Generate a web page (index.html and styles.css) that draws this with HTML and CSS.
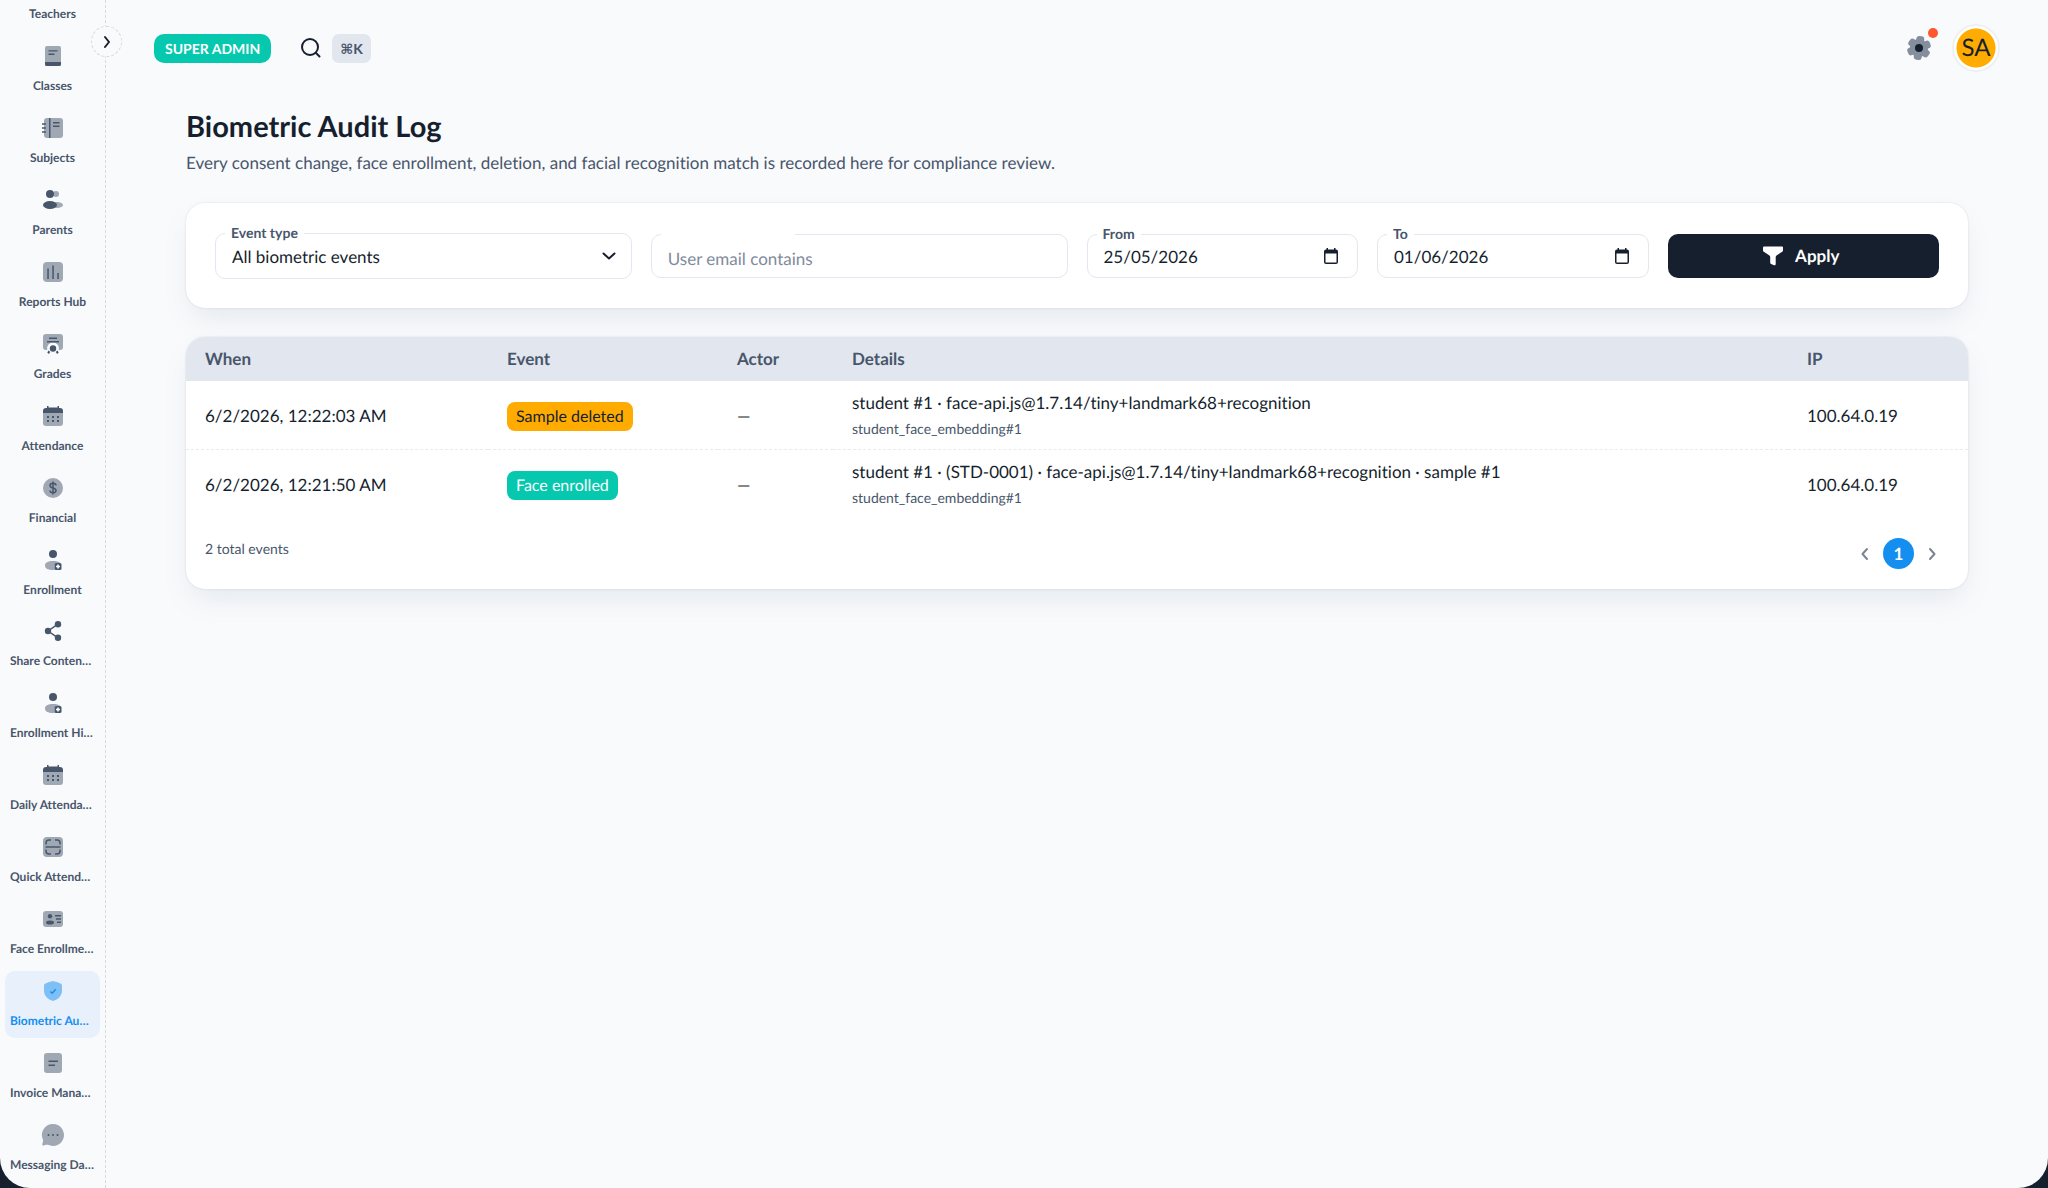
FILE: index.html
```html
<!DOCTYPE html>
<html lang="en">
<head>
<meta charset="utf-8">
<title>Biometric Audit Log</title>
<link rel="stylesheet" href="styles.css">
</head>
<body>
<svg width="0" height="0" class="sprite" aria-hidden="true">
  <symbol id="i-classes" viewBox="0 0 24 24"><path class="soft" d="M6 2h12a2 2 0 0 1 2 2v18H4V4a2 2 0 0 1 2-2z"/><path d="M4 18h16v2a2 2 0 0 1-2 2H6a2 2 0 0 1-2-2z"/><path d="M7.500 6.200h9v1.400h-9zM7.500 9.600h6v1.400h-6z"/></symbol>
  <symbol id="i-subjects" viewBox="0 0 24 24"><path class="soft" d="M6 2h13a3 3 0 0 1 3 3v14a3 3 0 0 1-3 3H6a3 3 0 0 1-3-3V5a3 3 0 0 1 3-3z"/><path d="M8 2h1.500v20H8zM1 7.200h4v1.500H1zM1 11.200h4v1.500H1zM1 15.200h4v1.500H1zM12 6h6.500v1.500H12zM12 9.500h6.500V11H12z"/></symbol>
  <symbol id="i-parents" viewBox="0 0 24 24"><circle class="soft" cx="15" cy="6" r="3"/><ellipse class="soft" cx="16" cy="17" rx="6" ry="3"/><circle cx="9" cy="6" r="4"/><ellipse cx="9" cy="17" rx="7" ry="4"/></symbol>
  <symbol id="i-reports" viewBox="0 0 24 24"><rect class="soft" x="2" y="2" width="20" height="20" rx="4"/><path d="M6.300 8.500h1.500V19H6.300zM11.300 5.500h1.500V19h-1.500zM16.300 13h1.500v6h-1.500z"/></symbol>
  <symbol id="i-grades" viewBox="0 0 24 24"><path class="soft" d="M5 2h14a3 3 0 0 1 3 3v10a3 3 0 0 1-3 3h-1.200a6 6 0 1 0-11.600 0H5a3 3 0 0 1-3-3V5a3 3 0 0 1 3-3z"/><path d="M8 5.500h8V7H8zM6 9h12v1.500H6z"/><circle cx="12" cy="16.500" r="3.200"/><path d="M7.500 18.500l1.800 1.600-1.500 2-1.500-1.500zM16.500 18.500l-1.800 1.600 1.500 2 1.500-1.500z"/></symbol>
  <symbol id="i-calendar" viewBox="0 0 24 24"><path class="soft" d="M2 9h20v10a3 3 0 0 1-3 3H5a3 3 0 0 1-3-3z"/><path d="M2 9V7a3 3 0 0 1 3-3h1V2h1.500v1.500h9V2H18v2h1a3 3 0 0 1 3 3v2z"/><path d="M6 12h2v2H6zM11 12h2v2h-2zM16 12h2v2h-2zM6 16h2v2H6zM11 16h2v2h-2zM16 16h2v2h-2z"/></symbol>
  <symbol id="i-financial" viewBox="0 0 24 24"><circle class="soft" cx="12" cy="12" r="10"/><path class="line" d="M15 9.500c0-1.500-1.300-2.300-3-2.300s-3 .8-3 2.300 1.300 2.200 3 2.500 3 1 3 2.500-1.300 2.300-3 2.300-3-.8-3-2.300M12 5.500v13"/></symbol>
  <symbol id="i-enroll" viewBox="0 0 24 24"><circle cx="12" cy="6" r="4"/><path class="soft" d="M14 22h-2c-5 0-8-1.500-8-4.500S7 13 12 13c3 0 6 .6 7.200 2H15.500a2 2 0 0 0-2 2v4a2 2 0 0 0 .5 1z"/><rect x="13.500" y="15" width="7" height="7" rx="1.500"/><path class="cut" d="M17 16.500v4M15 18.500h4"/></symbol>
  <symbol id="i-share" viewBox="0 0 24 24"><circle cx="7" cy="12" r="3.200"/><circle cx="17" cy="5.200" r="3.200"/><circle cx="17" cy="18.800" r="3.200"/><path class="line" d="M17 5.200L7 12l10 6.800"/></symbol>
  <symbol id="i-scan" viewBox="0 0 24 24"><rect class="soft" x="2" y="2" width="20" height="20" rx="4"/><path class="line" d="M4.500 12h15M5 9.500V8a3 3 0 0 1 3-3h2M14 5h2a3 3 0 0 1 3 3v1.500M5 14.500V16a3 3 0 0 0 3 3h2M14 19h2a3 3 0 0 0 3-3v-1.500"/></symbol>
  <symbol id="i-face" viewBox="0 0 24 24"><rect class="soft" x="2" y="4" width="20" height="16" rx="3"/><circle cx="9" cy="9.200" r="2.200"/><ellipse cx="9" cy="15.500" rx="4" ry="2"/><path d="M14 8h6v1.500h-6zM15 11.300h5v1.500h-5zM16 14.500h4V16h-4z"/></symbol>
  <symbol id="i-shield" viewBox="0 0 24 24"><path class="soft" d="M12 2c2 .3 6 1.700 8 2.800.7.400 1 .9 1 1.700v5c0 5.500-4 9-9 10.500C7 20.500 3 17 3 11.500v-5c0-.8.300-1.300 1-1.700C6 3.700 10 2.300 12 2z"/><path class="line" d="M9.300 12.500l1.900 1.700 3.500-4"/></symbol>
  <symbol id="i-invoice" viewBox="0 0 24 24"><rect class="soft" x="3" y="2" width="18" height="20" rx="3"/><path d="M7.500 9.500h9.500V11H7.500zM7.500 13.500H14V15H7.500z"/></symbol>
  <symbol id="i-message" viewBox="0 0 24 24"><path class="soft" d="M12 1a11 11 0 1 1-5 20.800c-.7-.3-1.300-.1-2 0L2.500 22.500c-.8.200-1.400-.4-1.200-1.200L2 18.500c.2-.7.200-1 0-1.600A11 11 0 0 1 12 1z"/><circle cx="7.500" cy="12" r="1"/><circle cx="12" cy="12" r="1"/><circle cx="16.500" cy="12" r="1"/></symbol>
</svg>
<div class="app">
  <aside class="sidebar">
    <nav class="nav" aria-label="Main">
      <a class="item" href="#"><svg class="icon"><use href="#i-parents"/></svg><span class="name">Teachers</span></a>
      <a class="item" href="#"><svg class="icon"><use href="#i-classes"/></svg><span class="name">Classes</span></a>
      <a class="item" href="#"><svg class="icon"><use href="#i-subjects"/></svg><span class="name">Subjects</span></a>
      <a class="item" href="#"><svg class="icon"><use href="#i-parents"/></svg><span class="name">Parents</span></a>
      <a class="item" href="#"><svg class="icon"><use href="#i-reports"/></svg><span class="name">Reports Hub</span></a>
      <a class="item" href="#"><svg class="icon"><use href="#i-grades"/></svg><span class="name">Grades</span></a>
      <a class="item" href="#"><svg class="icon"><use href="#i-calendar"/></svg><span class="name">Attendance</span></a>
      <a class="item" href="#"><svg class="icon"><use href="#i-financial"/></svg><span class="name">Financial</span></a>
      <a class="item" href="#"><svg class="icon"><use href="#i-enroll"/></svg><span class="name">Enrollment</span></a>
      <a class="item" href="#"><svg class="icon"><use href="#i-share"/></svg><span class="name long">Share Conten…</span></a>
      <a class="item" href="#"><svg class="icon"><use href="#i-enroll"/></svg><span class="name long">Enrollment Hi…</span></a>
      <a class="item" href="#"><svg class="icon"><use href="#i-calendar"/></svg><span class="name long">Daily Attenda…</span></a>
      <a class="item" href="#"><svg class="icon"><use href="#i-scan"/></svg><span class="name long">Quick Attend…</span></a>
      <a class="item" href="#"><svg class="icon"><use href="#i-face"/></svg><span class="name long">Face Enrollme…</span></a>
      <a class="item active" href="#" aria-current="page"><svg class="icon"><use href="#i-shield"/></svg><span class="name long">Biometric Au…</span></a>
      <a class="item" href="#"><svg class="icon"><use href="#i-invoice"/></svg><span class="name long">Invoice Mana…</span></a>
      <a class="item" href="#"><svg class="icon"><use href="#i-message"/></svg><span class="name long">Messaging Da…</span></a>
    </nav>
    <button class="expand" type="button" aria-label="Expand sidebar"><svg width="20" height="20" viewBox="0 0 20 20"><path d="M8 5l4 5-4 5"/></svg></button>
  </aside>
  <main class="main">
    <header class="topbar">
      <span class="role">SUPER ADMIN</span>
      <button class="search" type="button" aria-label="Search">
        <svg width="24" height="24" viewBox="0 0 24 24"><circle cx="11" cy="11" r="8"/><path d="M17 17l3.500 3.500"/></svg>
        <kbd class="kbd">⌘K</kbd>
      </button>
      <button class="settings" type="button" aria-label="Settings">
        <svg width="28" height="28" viewBox="-14 -14 28 28"><g class="teeth" transform="rotate(8)"><circle r="9"/><rect x="-4" y="-12" width="8" height="24" rx="3"/><rect x="-4" y="-12" width="8" height="24" rx="3" transform="rotate(60)"/><rect x="-4" y="-12" width="8" height="24" rx="3" transform="rotate(120)"/></g><circle class="hub" r="4"/></svg>
        <span class="dot"></span>
      </button>
      <button class="avatar" type="button" aria-label="Account">SA</button>
    </header>
    <section class="content">
      <h1 class="title">Biometric Audit Log</h1>
      <p class="lead">Every consent change, face enrollment, deletion, and facial recognition match is recorded here for compliance review.</p>
      <form class="card filters">
        <div class="field wide">
          <label class="label" for="type">Event type</label>
          <select class="control select" id="type"><option>All biometric events</option></select>
          <svg class="chevron" width="16" height="10" viewBox="0 0 16 10"><path d="M2.500 2.500L8 7.500l5.500-5"/></svg>
        </div>
        <div class="field wide">
          <span class="notch"></span>
          <input class="control email" type="text" placeholder="User email contains" aria-label="User email contains">
        </div>
        <div class="field">
          <label class="label" for="from">From</label>
          <input class="control" id="from" type="text" value="25/05/2026">
          <svg class="picker" width="14" height="16" viewBox="0 0 14 16"><use href="#cal"/></svg>
        </div>
        <div class="field">
          <label class="label" for="to">To</label>
          <input class="control" id="to" type="text" value="01/06/2026">
          <svg class="picker" width="14" height="16" viewBox="0 0 14 16"><path id="cal" d="M2.500 0H4v1.500h6V0h1.500v1.500H12a2 2 0 0 1 2 2V14a2 2 0 0 1-2 2H2a2 2 0 0 1-2-2V3.500a2 2 0 0 1 2-2h.5zM1.500 5.500V14.500h11v-9z"/></svg>
        </div>
        <button class="apply" type="button"><svg width="22" height="20" viewBox="0 0 22 20"><path d="M2 .5h18a1 1 0 0 1 1 1V4c0 1-.4 1.600-1.200 2.100L14.500 9.500c-.5.400-.8.900-.8 1.500V18c0 1-.7 1.500-1.600 1.200l-3-1.200c-.6-.3-.9-.7-.9-1.300V11c0-.7-.3-1.200-.8-1.500L2.200 6.100C1.400 5.600 1 5 1 4V1.500a1 1 0 0 1 1-1z"/></svg>Apply</button>
      </form>
      <div class="card log">
        <table class="table">
          <colgroup><col class="c-when"><col class="c-event"><col class="c-actor"><col><col class="c-ip"></colgroup>
          <thead><tr><th>When</th><th>Event</th><th>Actor</th><th>Details</th><th>IP</th></tr></thead>
          <tbody>
            <tr><td>6/2/2026, 12:22:03 AM</td><td><span class="chip warn">Sample deleted</span></td><td>—</td><td>student #1 · face-api.js@1.7.14/tiny+landmark68+recognition<small class="ref">student_face_embedding#1</small></td><td>100.64.0.19</td></tr>
            <tr><td>6/2/2026, 12:21:50 AM</td><td><span class="chip ok">Face enrolled</span></td><td>—</td><td>student #1 · (STD-0001) · face-api.js@1.7.14/tiny+landmark68+recognition · sample #1<small class="ref">student_face_embedding#1</small></td><td>100.64.0.19</td></tr>
          </tbody>
        </table>
        <footer class="foot">
          <span class="total">2 total events</span>
          <div class="pager">
            <button class="step" type="button" aria-label="Previous page"><svg width="10" height="14" viewBox="0 0 10 14"><path d="M7 2L2.500 7 7 12"/></svg></button>
            <button class="page" type="button" aria-current="page">1</button>
            <button class="step" type="button" aria-label="Next page"><svg width="10" height="14" viewBox="0 0 10 14"><path d="M3 2l4.500 5L3 12"/></svg></button>
          </div>
        </footer>
      </div>
    </section>
  </main>
</div>
</body>
</html>
```
FILE: styles.css
```css
* { box-sizing: border-box; }

:root {
  --ink: #161f2e;
  --muted: #48566b;
  --line: #e2e8f0;
  --page: #f9fafc;
  --green: #05c8ae;
  --amber: #ffab00;
  --blue: #148fef;
}

body {
  margin: 0;
  background: #161f2e;
  color: var(--ink);
  font: 17px/26px Lato, "DejaVu Sans", sans-serif;
  font-variant-ligatures: none;
  text-rendering: geometricPrecision;
}

button, input, select { font: inherit; color: inherit; text-rendering: inherit; }
button { border: 0; padding: 0; background: none; cursor: pointer; }

.sprite { position: absolute; }

.app {
  display: flex;
  height: 100vh;
  background: var(--page);
  border-radius: 0 0 30px 30px;
  overflow: hidden;
}

/* sidebar */
.sidebar {
  position: relative;
  flex: 0 0 106px;
  display: flex;
  border-right: 1px dashed #d5dae1;
}
.nav {
  flex: 1;
  display: flex;
  flex-direction: column;
  justify-content: space-between;
  margin: -36px 0 6px;
  padding: 0 5px;
}
.item {
  flex: none;
  height: 67px;
  display: flex;
  flex-direction: column;
  align-items: center;
  padding-top: 8px;
  gap: 9px;
  border-radius: 10px;
  color: var(--muted);
  text-decoration: none;
}
.item.active { background: #e8f0fc; color: var(--blue); }
.icon { width: 24px; height: 24px; fill: currentColor; }
.soft { opacity: .5; }
.line { fill: none; stroke: currentColor; stroke-width: 1.500; }
.cut { fill: none; stroke: #fff; stroke-width: 1.500; }
.name { font-size: 12px; line-height: 18px; font-weight: 700; white-space: nowrap; }
.long { align-self: stretch; padding-left: 5px; }
.expand {
  position: absolute;
  top: 26px;
  right: -17px;
  width: 31px;
  height: 31px;
  display: grid;
  place-items: center;
  background: var(--page);
  border: 1px dashed #d5dae1;
  border-radius: 50%;
}
.expand svg, .search svg, .chevron, .step svg { fill: none; stroke: currentColor; stroke-width: 2; stroke-linecap: round; stroke-linejoin: round; }

/* top bar */
.main { flex: 1; min-width: 0; padding: 0 48px; overflow: auto; }
.topbar { display: flex; align-items: center; height: 96px; }
.role {
  padding: 0 11px;
  line-height: 29px;
  border-radius: 10px;
  background: var(--green);
  color: #fff;
  font-size: 14px;
  font-weight: 700;
}
.search { display: flex; align-items: center; gap: 9px; margin-left: 28px; }
.kbd {
  padding: 0 8px;
  line-height: 29px;
  border-radius: 7px;
  background: #e1e6ef;
  color: var(--muted);
  font-family: inherit;
  font-size: 14px;
  font-weight: 700;
}
.settings { position: relative; display: flex; margin-left: auto; }
.teeth { fill: #848e9d; }
.hub { fill: var(--ink); }
.dot { position: absolute; top: -6px; right: -5px; width: 10px; height: 10px; border-radius: 50%; background: #ff5630; }
.avatar {
  width: 48px;
  height: 48px;
  margin-left: 19px;
  border: 2px solid #eef1f4;
  border-radius: 50%;
  background: radial-gradient(circle, var(--amber) 19px, #fff 20px) border-box;
  font-size: 24px;
}

/* page content */
.content { padding: 13px 32px 40px; }
.title { margin: 0; font-size: 29px; line-height: 36px; font-weight: 700; }
.lead { margin: 5px 0 27px; color: var(--muted); }

.card {
  background: #fff;
  border-radius: 19px;
  box-shadow: 0 0 2px rgba(100, 130, 160, .25), 0 14px 28px -5px rgba(100, 130, 150, .14);
}

.filters {
  display: grid;
  grid-template-columns: repeat(12, 1fr);
  align-items: center;
  gap: 19px;
  padding: 30px 29px 29px;
}
.field { position: relative; grid-column: span 2; }
.wide { grid-column: span 3; }
.apply { grid-column: span 2; }
.control {
  display: block;
  width: 100%;
  height: 44px;
  padding: 0 16px;
  border: 1px solid var(--line);
  border-radius: 10px;
  background: #fff;
  outline: 0;
}
.select { height: 46px; padding-top: 2px; appearance: none; }
.email { padding-top: 4px; }
.email::placeholder { color: #7f8b9b; opacity: 1; }
.label {
  position: absolute;
  top: -9px;
  left: 10px;
  padding: 0 6px;
  background: #fff;
  color: var(--muted);
  font-size: 14px;
  line-height: 18px;
  font-weight: 700;
}
.notch { position: absolute; top: 0; left: 10px; width: 134px; height: 2px; background: #fff; }
.chevron { position: absolute; right: 15px; top: 18px; }
.picker { position: absolute; right: 20px; top: 14px; fill: currentColor; fill-rule: evenodd; }
.apply {
  display: flex;
  align-items: center;
  justify-content: center;
  gap: 11px;
  height: 44px;
  padding-right: 5px;
  border-radius: 10px;
  background: var(--ink);
  color: #fff;
  font-weight: 700;
}
.apply svg { fill: currentColor; }

/* audit log */
.log { margin-top: 29px; overflow: hidden; }
.table { width: 100%; border-collapse: collapse; table-layout: fixed; }
.c-when { width: 302px; }
.c-event { width: 230px; }
.c-actor { width: 115px; }
.c-ip { width: 180px; }
th, td { padding: 0 19px; text-align: left; }
th { height: 44px; background: #e2e6ef; color: var(--muted); font-weight: 700; }
td { padding: 9px 19px 7px; border-bottom: 1px dashed #e8ebef; }
tr:last-child td { border-bottom: 0; }
.ref { display: block; color: var(--muted); font-size: 14px; line-height: 26px; }
.chip { display: inline-block; padding: 0 9px; line-height: 29px; border-radius: 8px; font-size: 16px; }
.warn { background: var(--amber); }
.ok { background: var(--green); color: #fff; }
.foot { display: flex; justify-content: space-between; padding: 20px 31px 20px 19px; }
.total { color: var(--muted); font-size: 14px; line-height: 22px; }
.pager { display: flex; align-items: center; gap: 13px; }
.step { display: flex; color: #7a8594; }
.page { width: 31px; height: 31px; border-radius: 50%; background: var(--blue); color: #fff; font-weight: 700; }
```
